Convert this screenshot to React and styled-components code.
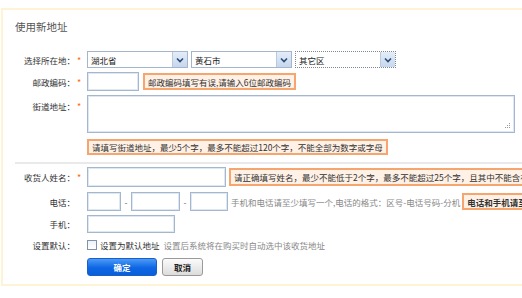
import React from 'react';
import styled, { createGlobalStyle } from 'styled-components';

const GlobalStyle = createGlobalStyle`
    html, body {
        margin: 0;
        padding: 0;
        background: #fff;
        overflow: hidden;
    }
    body {
        font-family: "Noto Sans CJK SC", "Liberation Sans", sans-serif;
        font-size: 8.5px;
        color: #333;
    }
`;

const Panel = styled.div`
    box-sizing: border-box;
    width: 560px;
    margin: 8px 0 0 1px;
    padding: 10px 0 8px 10px;
    border: 2px solid #fcf4d4;
    border-right: none;
    box-shadow: 0 2px 0 #c8c8c8;
`;

const Title = styled.div`
    font-size: 10.5px;
    line-height: 14px;
    color: #555;
    padding-left: 2px;
    margin-bottom: 17px;
`;

const Form = styled.div`
    display: flex;
    flex-direction: column;
`;

const Row = styled.div`
    display: flex;
    align-items: ${(p) => (p.$top ? 'flex-start' : 'center')};
    gap: 4px;
    margin-top: ${(p) => p.$mt || 0}px;
`;

const Label = styled.div`
    width: 70px;
    flex-shrink: 0;
    display: flex;
    justify-content: flex-end;
    align-items: center;
    line-height: 12px;
    color: #333;
    padding-top: ${(p) => (p.$top ? '4px' : '0')};
`;

const Star = styled.span`
    display: inline-block;
    width: 8px;
    text-align: center;
    color: #ff6a00;
    font-size: 9px;
    padding-top: 2px;
`;

const Fields = styled.div`
    display: flex;
    align-items: center;
    gap: ${(p) => p.$gap ?? 3}px;
    white-space: nowrap;
`;

const Column = styled.div`
    display: flex;
    flex-direction: column;
    gap: 6px;
    align-items: flex-start;
`;

const Select = styled.div`
    box-sizing: border-box;
    width: 101px;
    height: 17px;
    display: flex;
    align-items: center;
    border: 1px ${(p) => (p.$focus ? 'dotted #7d8794' : 'solid #a6b6ca')};
    background: #fff;
    padding-left: 3px;
    color: #222;
`;

const SelectText = styled.span`
    flex: 1;
    line-height: 14px;
`;

const Arrow = styled.span`
    width: 14px;
    height: 15px;
    display: flex;
    align-items: center;
    justify-content: center;
    background: linear-gradient(#e4edf9, #c7d7ee);
    border-left: 1px solid #b9c9de;
`;

const Input = styled.div`
    box-sizing: border-box;
    width: ${(p) => p.$w}px;
    height: ${(p) => p.$h || 19}px;
    border: 1px solid #a4b7ce;
    box-shadow: inset 0 0 0 1px #dfe7f1;
    background: #fff;
    flex-shrink: 0;
`;

const TextArea = styled.div`
    position: relative;
    box-sizing: border-box;
    width: 428px;
    height: 38px;
    border: 1px solid #a4b7ce;
    box-shadow: inset 0 0 0 1px #dfe7f1;
    background: #fff;
`;

const Grip = styled.svg`
    position: absolute;
    right: 3px;
    bottom: 3px;
`;

const Tip = styled.div`
    box-sizing: border-box;
    height: ${(p) => p.$h || 17}px;
    display: flex;
    align-items: center;
    padding: 0 3px;
    border: 2px solid #f7a56e;
    background: #fff1e5;
    color: #333;
    white-space: nowrap;
    font-weight: ${(p) => (p.$bold ? 700 : 400)};
`;

const Dash = styled.span`
    width: 6px;
    text-align: center;
    color: #666;
`;

const Help = styled.span`
    color: #888;
    margin-left: 1px;
`;

const Divider = styled.div`
    height: 2px;
    background: #e9e9e9;
    margin: 7px 0 3px 2px;
`;

const Check = styled.span`
    box-sizing: border-box;
    width: 10px;
    height: 10px;
    border: 1px solid #7f93ad;
    background: linear-gradient(#eef2f7, #fff);
`;

const CheckText = styled.span`
    color: #333;
`;

const Button = styled.div`
    box-sizing: border-box;
    height: 18px;
    width: ${(p) => p.$w}px;
    display: flex;
    align-items: center;
    justify-content: center;
    border-radius: 3px;
    font-weight: 700;
    font-size: 8.5px;
    ${(p) =>
        p.$primary
            ? `
        color: #fff;
        background: linear-gradient(#4c9af7, #0d66e4 55%, #0a5fd9);
        border: 1px solid #1a5fc8;
    `
            : `
        color: #222;
        background: linear-gradient(#fbfbfb, #dcdcdc);
        border: 1px solid #9a9a9a;
    `}
`;

const Chevron = () => (
    <svg width="8" height="6" viewBox="0 0 8 6">
        <path d="M1 1.5 L4 4.5 L7 1.5" fill="none" stroke="#2c4a78" strokeWidth="1.6" />
    </svg>
);

function Field({ label, required, top, children, mt }) {
    return (
        <Row $top={top} $mt={mt}>
            <Label $top={top}>
                {label}：<Star>{required ? '*' : ''}</Star>
            </Label>
            {children}
        </Row>
    );
}

function Dropdown({ text, focus }) {
    return (
        <Select $focus={focus}>
            <SelectText>{text}</SelectText>
            <Arrow>
                <Chevron />
            </Arrow>
        </Select>
    );
}

export default function App() {
    return (
        <>
            <GlobalStyle />
            <Panel>
                <Title>使用新地址</Title>
                <Form>
                    <Field label="选择所在地" required>
                        <Fields>
                            <Dropdown text="湖北省" />
                            <Dropdown text="黄石市" />
                            <Dropdown text="其它区" focus />
                        </Fields>
                    </Field>
                    <Field label="邮政编码" required mt={4}>
                        <Fields $gap={4}>
                            <Input $w={52} />
                            <Tip>邮政编码填写有误,请输入6位邮政编码</Tip>
                        </Fields>
                    </Field>
                    <Field label="街道地址" required top mt={4}>
                        <Column>
                            <TextArea>
                                <Grip width="7" height="7" viewBox="0 0 7 7">
                                    <g fill="#999">
                                        <rect x="5" y="1" width="1" height="1" />
                                        <rect x="3" y="3" width="1" height="1" />
                                        <rect x="5" y="3" width="1" height="1" />
                                        <rect x="1" y="5" width="1" height="1" />
                                        <rect x="3" y="5" width="1" height="1" />
                                        <rect x="5" y="5" width="1" height="1" />
                                    </g>
                                </Grip>
                            </TextArea>
                            <Tip $h={16}>请填写街道地址，最少5个字，最多不能超过120个字，不能全部为数字或字母</Tip>
                        </Column>
                    </Field>
                </Form>
                <Divider />
                <Form>
                    <Field label="收货人姓名" required>
                        <Fields>
                            <Input $w={139} $h={20} />
                            <Tip $h={18}>请正确填写姓名，最少不能低于2个字，最多不能超过25个字，且其中不能含有非法字符</Tip>
                        </Fields>
                    </Field>
                    <Field label="电话" mt={5}>
                        <Fields $gap={2}>
                            <Input $w={34} />
                            <Dash>-</Dash>
                            <Input $w={49} />
                            <Dash>-</Dash>
                            <Input $w={38} />
                            <Help>手机和电话请至少填写一个,电话的格式：区号-电话号码-分机</Help>
                            <Tip $bold>电话和手机请至少填写一个</Tip>
                        </Fields>
                    </Field>
                    <Field label="手机" mt={4}>
                        <Fields>
                            <Input $w={88} $h={18} />
                        </Fields>
                    </Field>
                    <Field label="设置默认" mt={6}>
                        <Fields>
                            <Check />
                            <CheckText>设置为默认地址</CheckText>
                            <Help>设置后系统将在购买时自动选中该收货地址</Help>
                        </Fields>
                    </Field>
                    <Row $mt={7}>
                        <Label />
                        <Fields $gap={5}>
                            <Button $primary $w={70}>确定</Button>
                            <Button $w={41}>取消</Button>
                        </Fields>
                    </Row>
                </Form>
            </Panel>
        </>
    );
}
